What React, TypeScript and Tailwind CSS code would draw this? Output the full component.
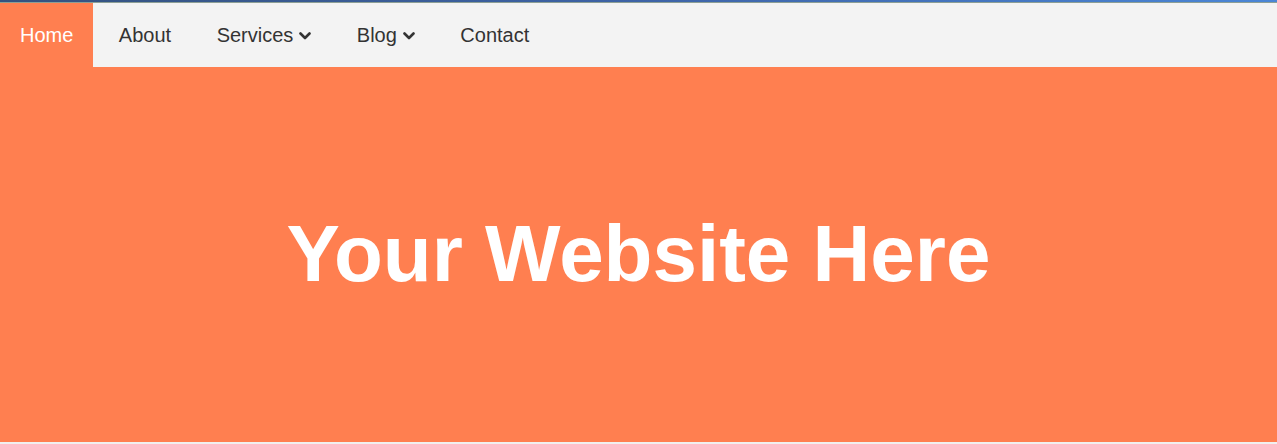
import React from 'react';

function Chevron() {
  return (
    <svg width="12" height="8" viewBox="0 0 12 8" className="ml-[6px] mt-[1px]">
      <path d="M1.5 1.5 L6 6 L10.5 1.5" fill="none" stroke="#333333" strokeWidth="2.6" strokeLinecap="round" strokeLinejoin="round" />
    </svg>
  );
}

export default function App() {
  const links = [
    { label: 'Home', active: true },
    { label: 'About' },
    { label: 'Services', dropdown: true },
    { label: 'Blog', dropdown: true },
    { label: 'Contact' },
  ];

  return (
    <div className="min-h-screen bg-[#f0f0f0] font-['Liberation_Sans',Arial,sans-serif]">
      {/* window edge */}
      <div className="h-[2px] bg-gradient-to-r from-[#34527f] via-[#3d63a6] to-[#4a86d6]" />
      <div className="h-[1px] bg-[#8d9f95]" />

      <nav className="flex h-[64px] bg-[#f3f3f3] gap-[5.5px]">
        {links.map((l) => (
          <a
            key={l.label}
            href="#"
            className={`flex items-center px-5 text-[20px] ${
              l.active ? 'bg-[#ff7f50] text-white' : 'text-[#333333]'
            }`}
          >
            {l.label}
            {l.dropdown && <Chevron />}
          </a>
        ))}
      </nav>

      <div className="h-[375px] bg-[#ff7f50] flex items-center justify-center">
        <h1 className="text-white font-bold text-[80px] leading-none mt-[-2px]">Your Website Here</h1>
      </div>
    </div>
  );
}
